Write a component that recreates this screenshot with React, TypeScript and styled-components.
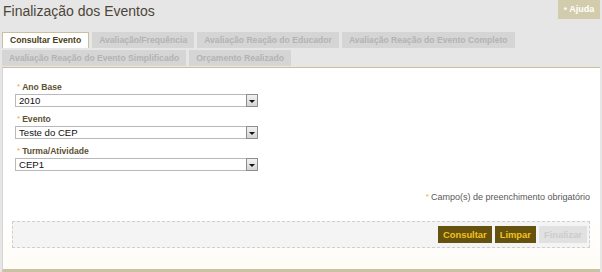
import styled, { createGlobalStyle } from 'styled-components';

const GlobalStyle = createGlobalStyle`
    html, body {
        margin: 0;
        padding: 0;
        background: #e6e6e6;
        font-family: "Liberation Sans", Arial, sans-serif;
    }
`;

const Page = styled.div`
    width: 602px;
    height: 272px;
    overflow: hidden;
    display: flex;
    flex-direction: column;
`;

const Header = styled.div`
    display: flex;
    justify-content: space-between;
    align-items: flex-start;
    height: 30px;
`;

const Title = styled.h1`
    margin: 1px 0 0 3px;
    font-size: 14px;
    line-height: 20px;
    font-weight: normal;
    color: #4c4537;
`;

const HelpButton = styled.div`
    margin-right: 2px;
    width: 42px;
    height: 19px;
    background: #d3ccac;
    color: #ffffff;
    font-size: 9px;
    font-weight: bold;
    line-height: 19px;
    text-align: center;
`;

const Tabs = styled.div`
    display: flex;
    flex-wrap: wrap;
    gap: 2px 3px;
    margin-top: 2px;
    padding: 0 10px 0 2px;
`;

const Tab = styled.div<{ active?: boolean }>`
    height: 16px;
    padding: 0 7px;
    box-sizing: border-box;
    line-height: 15px;
    font-size: 8.6px;
    font-weight: bold;
    white-space: nowrap;
    background: ${p => (p.active ? '#ffffff' : '#d5d5d5')};
    color: ${p => (p.active ? '#4a3d16' : '#b3b3b3')};
    border: ${p => (p.active ? '1px solid #cbbf9c' : 'none')};
    border-bottom: none;
    line-height: ${p => (p.active ? '15px' : '16px')};
`;

const Panel = styled.div`
    margin: 1px 2px 0 2px;
    flex: 1;
    background: linear-gradient(#ffffff 75%, #fffcf6);
    border-top: 1px solid #cbbf9c;
    border-left: 1px solid #d6d6d6;
    border-bottom: 3px solid #c9c1a3;
    padding: 13px 10px 0 12px;
    display: flex;
    flex-direction: column;
`;

const Field = styled.div`
    display: flex;
    flex-direction: column;
    gap: 1px;
    margin-bottom: 6px;
`;

const Label = styled.label`
    height: 12px;
    line-height: 12px;
    padding-left: 2px;
    font-size: 8.6px;
    font-weight: bold;
    color: #5d5131;
`;

const Star = styled.span`
    color: #e9aa3c;
    font-weight: normal;
    font-size: 8px;
    margin-right: 2px;
    vertical-align: 1px;
`;

const Select = styled.div`
    width: 243px;
    height: 13px;
    box-sizing: border-box;
    border: 1px solid #b9b9b9;
    background: #ffffff;
    display: flex;
    align-items: center;
    justify-content: space-between;
    padding-left: 3px;
    font-size: 9.6px;
    color: #111111;
`;

const DropButton = styled.div`
    width: 12px;
    height: 13px;
    margin-right: -1px;
    box-sizing: border-box;
    border: 1px solid #8d8d8d;
    background: linear-gradient(#f2f2f2, #d4d4d4);
    display: flex;
    align-items: center;
    justify-content: center;
`;

const Arrow = styled.span`
    width: 0;
    height: 0;
    border-left: 3px solid transparent;
    border-right: 3px solid transparent;
    border-top: 3px solid #111111;
    margin-top: 1px;
`;

const RequiredNote = styled.div`
    margin-top: 14px;
    text-align: right;
    font-size: 9px;
    line-height: 12px;
    color: #585858;
`;

const ButtonBar = styled.div`
    margin: 18px 0 0 -3px;
    height: 27px;
    box-sizing: border-box;
    border: 1px dashed #cfcfcf;
    background: #f4f4f4;
    display: flex;
    justify-content: flex-end;
    align-items: center;
    gap: 3px;
    padding: 0 2px 0 0;
`;

const Button = styled.div<{ disabled?: boolean }>`
    height: 17px;
    line-height: 17px;
    padding: 0 5px;
    font-size: 9.4px;
    font-weight: bold;
    background: ${p => (p.disabled ? '#e1e1e1' : '#66520f')};
    color: ${p => (p.disabled ? '#cccccc' : '#f2c21c')};
`;

const FIELDS = [
    { label: 'Ano Base', value: '2010' },
    { label: 'Evento', value: 'Teste do CEP' },
    { label: 'Turma/Atividade', value: 'CEP1' },
];

const TABS = [
    'Consultar Evento',
    'Avaliação/Frequência',
    'Avaliação Reação do Educador',
    'Avaliação Reação do Evento Completo',
    'Avaliação Reação do Evento Simplificado',
    'Orçamento Realizado',
];

const App = () => {
    return (
        <Page>
            <GlobalStyle />
            <Header>
                <Title>Finalização dos Eventos</Title>
                <HelpButton>• Ajuda</HelpButton>
            </Header>
            <Tabs>
                {TABS.map((tab, i) => (
                    <Tab key={tab} active={i === 0}>{tab}</Tab>
                ))}
            </Tabs>
            <Panel>
                {FIELDS.map(field => (
                    <Field key={field.label}>
                        <Label><Star>*</Star>{field.label}</Label>
                        <Select>
                            {field.value}
                            <DropButton><Arrow /></DropButton>
                        </Select>
                    </Field>
                ))}
                <RequiredNote><Star>*</Star>Campo(s) de preenchimento obrigatório</RequiredNote>
                <ButtonBar>
                    <Button>Consultar</Button>
                    <Button>Limpar</Button>
                    <Button disabled>Finalizar</Button>
                </ButtonBar>
            </Panel>
        </Page>
    );
};

export default App;
